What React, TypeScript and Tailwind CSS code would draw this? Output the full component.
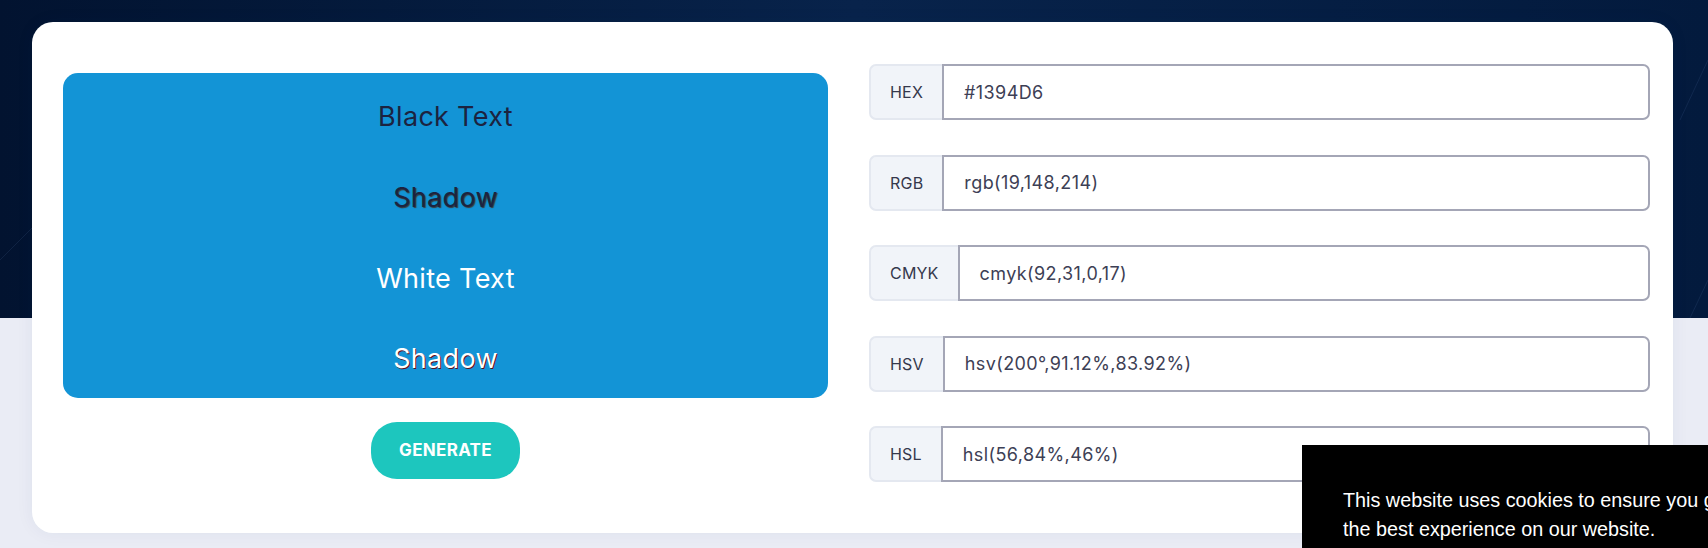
const rows = [
  { label: 'HEX', value: '#1394D6' },
  { label: 'RGB', value: 'rgb(19,148,214)' },
  { label: 'CMYK', value: 'cmyk(92,31,0,17)' },
  { label: 'HSV', value: 'hsv(200°,91.12%,83.92%)' },
  { label: 'HSL', value: 'hsl(56,84%,46%)' },
];

function ColorField({ label, value }: { label: string; value: string }) {
  return (
    <div className="flex h-[56px]">
      <span className="flex items-center px-[19px] bg-[#f1f4f9] border-2 border-r-0 border-[#e4e8f0] rounded-l-[7px] text-[16px] tracking-[0.2px] text-[#35384c]">
        {label}
      </span>
      <div className="flex-1 flex items-center pl-[20px] border-2 border-[#a4a6b6] rounded-r-[7px] bg-white text-[18px] tracking-[0.4px] text-[#3d4055]">
        {value}
      </div>
    </div>
  );
}

export default function App() {
  return (
    <div className="relative w-full h-[548px] overflow-hidden bg-[#eaecf5] font-['Inter',sans-serif]">
      {/* dark header band */}
      <div className="absolute inset-x-0 top-0 h-[318px] bg-gradient-to-r from-[#021330] via-[#08234b] to-[#031a3d]">
        <svg className="w-full h-full opacity-10" viewBox="0 0 1708 318" preserveAspectRatio="none">
          <g stroke="#7fa8e0" strokeWidth="1" fill="none">
            <path d="M0 260 L60 200 L40 318" />
            <path d="M1680 120 L1708 60" />
            <path d="M1690 318 L1708 280" />
          </g>
        </svg>
      </div>

      <div className="relative pt-[22px] pl-[31.5px] pr-[35px]">
        <div className="bg-white rounded-[21px] shadow-[0_0_18px_rgba(40,50,110,0.06)] pl-[31.5px] pr-[23px] pt-[42px] pb-[51px] grid grid-cols-[765px_1fr] gap-x-[41px]">
          {/* preview */}
          <div className="pt-[9px] flex flex-col items-center">
            <div className="w-full h-[325px] bg-[#1394D6] rounded-[15px] flex flex-col text-[27px] tracking-[0.3px]">
              <div className="h-[87px] flex items-center justify-center pt-[2px] text-[#1c2340]">Black Text</div>
              <div className="h-[77px] flex items-center justify-center text-[#1c2340] [text-shadow:1px_1px_1px_#3a3a3a]">Shadow</div>
              <div className="h-[84px] flex items-center justify-center text-white">White Text</div>
              <div className="h-[77px] flex items-center justify-center text-white [text-shadow:1px_1px_0_#5a1020]">Shadow</div>
            </div>
            <button className="mt-[24px] w-[149px] h-[57px] rounded-[26px] bg-[#1dc6be] text-white font-bold text-[17px] tracking-[0.3px]">
              GENERATE
            </button>
          </div>

          {/* values */}
          <div className="flex flex-col gap-[34.5px]">
            {rows.map((r) => (
              <ColorField key={r.label} label={r.label} value={r.value} />
            ))}
          </div>
        </div>
      </div>

      {/* cookie banner */}
      <div className="absolute left-[1302px] top-[445px] w-[490px] h-[140px] bg-black px-[41px] pt-[41px] text-white text-[19.8px] leading-[29px] font-['Liberation_Sans',Arial,sans-serif]">
        This website uses cookies to ensure you get the best experience on our website.
      </div>
    </div>
  );
}
